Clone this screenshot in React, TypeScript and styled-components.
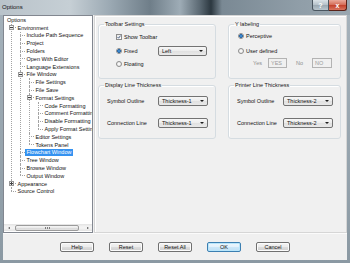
import React from "react"
import styled, { createGlobalStyle, css } from "styled-components"

type TreeItem = { label: string; open?: boolean; selected?: boolean; children?: TreeItem[] }

const treeData: TreeItem[] = [
  {
    label: "Environment",
    open: true,
    children: [
      { label: "Include Path Sequence" },
      { label: "Project" },
      { label: "Folders" },
      { label: "Open With Editor" },
      { label: "Language Extensions" },
      {
        label: "File Window",
        open: true,
        children: [
          { label: "File Settings" },
          { label: "File Save" },
          {
            label: "Format Settings",
            open: true,
            children: [
              { label: "Code Formatting" },
              { label: "Comment Formatting" },
              { label: "Disable Formatting" },
              { label: "Apply Format Settings" },
            ],
          },
          { label: "Editor Settings" },
          { label: "Tokens Panel" },
        ],
      },
      { label: "Flowchart Window", selected: true },
      { label: "Tree Window" },
      { label: "Browse Window" },
      { label: "Output Window" },
    ],
  },
  { label: "Appearance", open: false, children: [{ label: "Colors" }] },
  { label: "Source Control" },
]

const GlobalStyle = createGlobalStyle`
  * { box-sizing: border-box; }
  html, body { margin: 0; padding: 0; }
  body {
    background: #94a2ac;
    font-family: "Liberation Sans", Arial, sans-serif;
    color: #111;
  }
`

const Window = styled.div`
  width: 350px;
  height: 263px;
  display: flex;
  flex-direction: column;
  background: linear-gradient(180deg, #a6b3bc, #8b99a3);
  overflow: hidden;
`

const TitleBar = styled.div`
  height: 15px;
  flex: none;
  display: flex;
  align-items: flex-start;
  padding-left: 2px;
  background: linear-gradient(
    90deg,
    #b9c3ca 0px,
    #c6cfd5 70px,
    #9ba9b3 110px,
    #6f7e89 150px,
    #9eacb6 180px,
    #5a6872 200px,
    #2c3840 211px,
    #7a8994 222px,
    #909ea8 300px,
    #9aa7b0 350px
  );
`

const Title = styled.span`
  flex: 1;
  font-size: 6px;
  line-height: 15px;
  color: #111;
`

const Captions = styled.div`
  display: flex;
  margin-right: 3px;
`

const CaptionButton = styled.span<{ $close?: boolean }>`
  width: 17px;
  height: 11px;
  display: flex;
  align-items: center;
  justify-content: center;
  font-size: 7px;
  font-weight: bold;
  color: #fff;
  border: 1px solid #4a5660;
  border-top: none;
  border-radius: 0 0 0 3px;
  background: linear-gradient(#dbe3e8, #b4c0c8 50%, #9aa8b2 51%, #b9c5cd);
  ${p =>
    p.$close &&
    css`
      width: 18px;
      border-left: none;
      border-radius: 0 0 3px 0;
      border-color: #5a2218;
      background: linear-gradient(#eaa99a, #d46a55 50%, #c2402a 51%, #d9745e);
    `}
`

const Frame = styled.div`
  flex: 1;
  display: flex;
  padding: 0 3px 3px 3px;
`

const Client = styled.div`
  flex: 1;
  display: flex;
  flex-direction: column;
  background: #f0f0f0;
`

const Main = styled.div`
  height: 218px;
  display: flex;
  gap: 1px;
`

/* ---------- tree ---------- */

const Tree = styled.div`
  width: 90px;
  flex: none;
  display: flex;
  flex-direction: column;
  background: #fff;
  border: 1px solid #828790;
`

const TreeBody = styled.div`
  flex: 1;
  overflow: hidden;
  padding-left: 3px;
  font-size: 5.5px;
`

const Branch = styled.ul<{ $nested?: boolean }>`
  list-style: none;
  margin: 0;
  padding: 0 0 0 ${p => (p.$nested ? 9 : 0)}px;
`

const Node = styled.li<{ $last: boolean }>`
  position: relative;
  &::before {
    content: "";
    position: absolute;
    left: 4px;
    top: 0;
    height: ${p => (p.$last ? "3.5px" : "100%")};
    border-left: 1px dotted #a3a3a3;
  }
  &::after {
    content: "";
    position: absolute;
    left: 4px;
    top: 3.5px;
    width: 5px;
    border-top: 1px dotted #a3a3a3;
  }
`

const Row = styled.div`
  height: 7.8px;
  display: flex;
  align-items: center;
  white-space: nowrap;
`

const Joint = styled.span`
  width: 9px;
  height: 100%;
  flex: none;
  display: flex;
  align-items: center;
  padding-left: 2px;
  position: relative;
  z-index: 1;
`

const Expander = styled.span<{ $open?: boolean }>`
  width: 5px;
  height: 5px;
  position: relative;
  border: 1px solid #989898;
  background: linear-gradient(#fff, #e2e2e2);
  &::before {
    content: "";
    position: absolute;
    left: 0;
    right: 0;
    top: 1px;
    height: 1px;
    background: #404040;
  }
  ${p =>
    !p.$open &&
    css`
      &::after {
        content: "";
        position: absolute;
        top: 0;
        bottom: 0;
        left: 1px;
        width: 1px;
        background: #404040;
      }
    `}
`

const Label = styled.span<{ $selected?: boolean }>`
  height: 100%;
  display: flex;
  align-items: center;
  padding: 0 1.5px;
  ${p =>
    p.$selected &&
    css`
      background: #3592f0;
      color: #fff;
    `}
`

const RootLabel = styled(Label)`
  margin-left: -1.5px;
`

const HScroll = styled.div`
  height: 7px;
  flex: none;
  display: flex;
  margin-bottom: 1px;
  background: linear-gradient(#e3e3e3, #f3f3f3 40%, #f3f3f3 60%, #e3e3e3);
`

const ScrollArrow = styled.span<{ $dir: "left" | "right" }>`
  width: 9px;
  flex: none;
  display: flex;
  align-items: center;
  justify-content: center;
  &::before {
    content: "";
    border-top: 1.5px solid transparent;
    border-bottom: 1.5px solid transparent;
    ${p => (p.$dir === "left" ? "border-right: 2px solid #505050;" : "border-left: 2px solid #505050;")}
  }
`

const ScrollTrack = styled.div`
  flex: 1;
  display: flex;
  align-items: center;
  padding: 0 2px;
`

const Thumb = styled.div`
  width: 64px;
  height: 6px;
  display: flex;
  align-items: center;
  justify-content: center;
  gap: 1px;
  border: 1px solid #9b9b9b;
  border-radius: 2px;
  background: linear-gradient(#f6f6f6, #e9e9e9 50%, #dadada 51%, #e2e2e2);
`

const Grip = styled.span`
  width: 1px;
  height: 2px;
  background: #7d7d7d;
`

/* ---------- right panel ---------- */

const Panel = styled.div`
  flex: 1;
  display: grid;
  grid-template-columns: 118px 113px;
  grid-template-rows: 58px 57px;
  column-gap: 12px;
  row-gap: 3px;
  align-content: start;
  padding: 5px 0 0 3px;
  border: 1px solid #d6d6d6;
  box-shadow: inset 1px 1px 0 #fff;
`

const Group = styled.fieldset<{ $top: number; $indent: number; $gap: number }>`
  margin: 0;
  min-width: 0;
  display: flex;
  flex-direction: column;
  gap: ${p => p.$gap}px;
  padding: ${p => p.$top}px 0 0 ${p => p.$indent}px;
  border: 1px solid #d5dce1;
  border-radius: 3px;
  box-shadow: inset 1px 1px 0 #fff;
  font-size: 5.5px;
`

/* the legend starts after the fieldset's left padding, so pull it back */
const Legend = styled.legend<{ $indent: number }>`
  font-size: 5.5px;
  line-height: 7px;
  padding: 0 1px;
  margin-left: ${p => 5 - p.$indent}px;
`

const OptionRow = styled.div`
  height: 10px;
  display: flex;
  align-items: center;
  gap: 2px;
  white-space: nowrap;
`

const FieldRow = styled.div<{ $label: number }>`
  height: 10px;
  display: grid;
  grid-template-columns: ${p => p.$label}px auto;
  align-items: center;
  white-space: nowrap;
`

const ValueRow = styled.div`
  height: 10px;
  margin-top: -3px;
  padding-left: 15px;
  display: grid;
  grid-template-columns: 15px 19px 25px 20px;
  align-items: center;
`

const DimText = styled.span<{ $center?: boolean }>`
  color: #8f8f8f;
  text-align: ${p => (p.$center ? "center" : "left")};
`

const TextBox = styled.span`
  height: 10px;
  display: flex;
  align-items: center;
  padding-left: 2px;
  border: 1px solid #b3b3b3;
  background: #f0f0f0;
  color: #9a9a9a;
`

const Checkbox = styled.span`
  width: 6px;
  height: 6px;
  flex: none;
  display: flex;
  border: 1px solid #8c8c8c;
  background: linear-gradient(135deg, #e6e6e6, #fff);
`

const Radio = styled.span<{ $on?: boolean }>`
  width: 6px;
  height: 6px;
  flex: none;
  border-radius: 50%;
  border: 1px solid #8c8c8c;
  background: radial-gradient(circle, #fff, #e2e2e2);
  ${p =>
    p.$on &&
    css`
      background: radial-gradient(circle, #55a6e6 0, #1d64ad 1.6px, #dfe6ec 2.1px);
    `}
`

const Select = styled.div<{ $w: number }>`
  width: ${p => p.$w}px;
  height: 10px;
  display: flex;
  align-items: center;
  padding: 0 3px;
  border: 1px solid #737373;
  border-radius: 2px;
  background: linear-gradient(#f7f7f7, #ececec 50%, #e0e0e0 51%, #e9e9e9);
`

const Arrow = styled.span`
  margin-left: auto;
  width: 0;
  height: 0;
  border-left: 2px solid transparent;
  border-right: 2px solid transparent;
  border-top: 2.5px solid #1e1e1e;
`

/* ---------- buttons ---------- */

const ButtonBar = styled.div`
  flex: 1;
  display: flex;
  align-items: center;
  gap: 15px;
  padding-left: 57px;
  border-top: 1px solid #fbfbfb;
`

const Button = styled.span<{ $primary?: boolean }>`
  width: 34px;
  height: 10px;
  display: flex;
  align-items: center;
  justify-content: center;
  font-size: 5.5px;
  border: 1px solid #707070;
  border-radius: 2px;
  background: linear-gradient(#f4f4f4, #ebebeb 50%, #dddddd 51%, #cfcfcf);
  box-shadow: inset 0 0 0 1px #fbfbfb;
  ${p =>
    p.$primary &&
    css`
      border-color: #3c7fb1;
      background: linear-gradient(#eef7fd, #e2f1fb 50%, #cde7f8 51%, #bfe0f5);
      box-shadow: inset 0 0 0 1px #b9e6fb;
    `}
`

function TreeNode({ item, last }: { item: TreeItem; last: boolean }) {
  const kids = item.children
  return (
    <Node $last={last}>
      <Row>
        <Joint>{kids && <Expander $open={item.open} />}</Joint>
        <Label $selected={item.selected}>{item.label}</Label>
      </Row>
      {kids && item.open && (
        <Branch $nested>
          {kids.map((k, i) => (
            <TreeNode key={k.label} item={k} last={i === kids.length - 1} />
          ))}
        </Branch>
      )}
    </Node>
  )
}

function Check() {
  return (
    <svg width="4" height="4" viewBox="0 0 8 8">
      <path d="M1 4.2 L3.2 6.4 L7 1.2" fill="none" stroke="#24406f" strokeWidth="1.6" />
    </svg>
  )
}

export default function App() {
  return (
    <>
      <GlobalStyle />
      <Window>
        <TitleBar>
          <Title>Options</Title>
          <Captions>
            <CaptionButton>?</CaptionButton>
            <CaptionButton $close>x</CaptionButton>
          </Captions>
        </TitleBar>
        <Frame>
          <Client>
            <Main>
              <Tree>
                <TreeBody>
                  <Row>
                    <RootLabel>Options</RootLabel>
                  </Row>
                  <Branch>
                    {treeData.map((t, i) => (
                      <TreeNode key={t.label} item={t} last={i === treeData.length - 1} />
                    ))}
                  </Branch>
                </TreeBody>
                <HScroll>
                  <ScrollArrow $dir="left" />
                  <ScrollTrack>
                    <Thumb>
                      <Grip />
                      <Grip />
                      <Grip />
                    </Thumb>
                  </ScrollTrack>
                  <ScrollArrow $dir="right" />
                </HScroll>
              </Tree>

              <Panel>
                <Group $top={4} $indent={17} $gap={3.5}>
                  <Legend $indent={17}>Toolbar Settings</Legend>
                  <OptionRow>
                    <Checkbox>
                      <Check />
                    </Checkbox>
                    Show Toolbar
                  </OptionRow>
                  <FieldRow $label={42}>
                    <OptionRow>
                      <Radio $on />
                      Fixed
                    </OptionRow>
                    <Select $w={49}>
                      Left
                      <Arrow />
                    </Select>
                  </FieldRow>
                  <OptionRow>
                    <Radio />
                    Floating
                  </OptionRow>
                </Group>

                <Group $top={3} $indent={9} $gap={5}>
                  <Legend $indent={9}>Y labeling</Legend>
                  <OptionRow>
                    <Radio $on />
                    Perceptive
                  </OptionRow>
                  <OptionRow>
                    <Radio />
                    User defined
                  </OptionRow>
                  <ValueRow>
                    <DimText>Yes</DimText>
                    <TextBox>YES</TextBox>
                    <DimText $center>No</DimText>
                    <TextBox>NO</TextBox>
                  </ValueRow>
                </Group>

                <Group $top={7} $indent={8} $gap={12}>
                  <Legend $indent={8}>Display Line Thickness</Legend>
                  <FieldRow $label={51}>
                    <span>Symbol Outline</span>
                    <Select $w={50}>
                      Thickness-1
                      <Arrow />
                    </Select>
                  </FieldRow>
                  <FieldRow $label={51}>
                    <span>Connection Line</span>
                    <Select $w={50}>
                      Thickness-1
                      <Arrow />
                    </Select>
                  </FieldRow>
                </Group>

                <Group $top={7} $indent={8} $gap={12}>
                  <Legend $indent={8}>Printer Line Thickness</Legend>
                  <FieldRow $label={46}>
                    <span>Symbol Outline</span>
                    <Select $w={50}>
                      Thickness-2
                      <Arrow />
                    </Select>
                  </FieldRow>
                  <FieldRow $label={46}>
                    <span>Connection Line</span>
                    <Select $w={50}>
                      Thickness-2
                      <Arrow />
                    </Select>
                  </FieldRow>
                </Group>
              </Panel>
            </Main>

            <ButtonBar>
              <Button>Help</Button>
              <Button>Reset</Button>
              <Button>Reset All</Button>
              <Button $primary>OK</Button>
              <Button>Cancel</Button>
            </ButtonBar>
          </Client>
        </Frame>
      </Window>
    </>
  )
}
